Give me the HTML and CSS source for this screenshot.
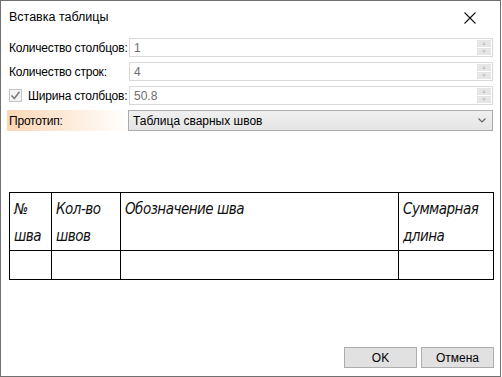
FILE: index.html
```html
<!DOCTYPE html>
<html lang="ru">
<head>
    <meta charset="UTF-8">
    <title>Вставка таблицы</title>
    <link rel="stylesheet" href="styles.css">
</head>
<body>
    <div class="dialog">
        <div class="titlebar">
            <span class="title">Вставка таблицы</span>
            <button class="close-btn" aria-label="Закрыть">
                <svg width="12" height="12" viewBox="0 0 12 12"><path d="M0.5 0.5 L11.5 11.5 M11.5 0.5 L0.5 11.5" stroke="#111" stroke-width="1.1" fill="none"/></svg>
            </button>
        </div>

        <!-- Table parameters -->
        <div class="form">
            <div class="form-row">
                <label class="field-label">Количество столбцов:</label>
                <div class="spin-box">
                    <span class="spin-value">1</span>
                    <div class="spin-buttons">
                        <span class="spin-btn">&#9650;</span>
                        <span class="spin-btn">&#9660;</span>
                    </div>
                </div>
            </div>
            <div class="form-row">
                <label class="field-label">Количество строк:</label>
                <div class="spin-box">
                    <span class="spin-value">4</span>
                    <div class="spin-buttons">
                        <span class="spin-btn">&#9650;</span>
                        <span class="spin-btn">&#9660;</span>
                    </div>
                </div>
            </div>
            <div class="form-row">
                <label class="field-label check-label">
                    <span class="checkbox">
                        <svg width="11" height="11" viewBox="0 0 11 11"><path d="M1.5 5.5 L4.3 8.5 L9.5 1.8" stroke="#7a7a7a" stroke-width="1.6" fill="none"/></svg>
                    </span>
                    Ширина столбцов:
                </label>
                <div class="spin-box">
                    <span class="spin-value">50.8</span>
                    <div class="spin-buttons">
                        <span class="spin-btn">&#9650;</span>
                        <span class="spin-btn">&#9660;</span>
                    </div>
                </div>
            </div>
            <div class="form-row proto-row">
                <label class="field-label proto-label">Прототип:</label>
                <div class="combo">
                    <span>Таблица сварных швов</span>
                    <svg width="8" height="5" viewBox="0 0 8 5"><path d="M0.5 0.5 L4 4 L7.5 0.5" stroke="#666" stroke-width="1.2" fill="none"/></svg>
                </div>
            </div>
        </div>

        <!-- Preview of the prototype table -->
        <div class="preview">
            <table class="weld-table">
                <colgroup>
                    <col class="c-num">
                    <col class="c-qty">
                    <col class="c-name">
                    <col class="c-len">
                </colgroup>
                <tr class="head">
                    <td>№<br>шва</td>
                    <td>Кол-во<br>швов</td>
                    <td>Обозначение шва</td>
                    <td>Суммарная<br>длина</td>
                </tr>
                <tr class="body-row">
                    <td></td><td></td><td></td><td></td>
                </tr>
            </table>
        </div>

        <div class="footer">
            <button class="btn">OK</button>
            <button class="btn">Отмена</button>
        </div>
    </div>
</body>
</html>
```

FILE: styles.css
```css
:root {
    --border: #707070;
    --field-border: #d9d9d9;
    --disabled-text: #6d6d6d;
}
body {
    margin: 0;
    background: #fff;
    font-family: "Liberation Sans", Arial, sans-serif;
    font-size: 12px;
    color: #000;
}
.dialog {
    width: 501px;
    height: 377px;
    box-sizing: border-box;
    border: 1px solid var(--border);
    display: flex;
    flex-direction: column;
    background: #fff;
}
.titlebar {
    height: 37px;
    display: flex;
    align-items: flex-start;
    justify-content: space-between;
    padding: 8px 0 0 8px;
    box-sizing: border-box;
}
.title {
    font-size: 12.5px;
    line-height: 16px;
}
.close-btn {
    background: none;
    border: none;
    padding: 0;
    margin: 3px 24px 0 0;
    width: 12px;
    height: 12px;
    display: flex;
}
/* Form rows */
.form {
    display: flex;
    flex-direction: column;
    gap: 5px;
    padding: 0 7px 0 7px;
}
.form-row {
    display: flex;
    align-items: stretch;
    height: 19px;
}
.proto-row {
    height: 21px;
}
.field-label {
    width: 121px;
    flex: none;
    display: flex;
    align-items: center;
    padding-left: 1px;
    box-sizing: border-box;
    white-space: nowrap;
    letter-spacing: -0.2px;
}
.check-label {
    gap: 6px;
}
.checkbox {
    width: 13px;
    height: 13px;
    box-sizing: border-box;
    border: 1px solid #c4c4c4;
    background: #f4f4f4;
    display: flex;
    align-items: center;
    justify-content: center;
}
.proto-label {
    background: linear-gradient(to right, #fcd6b4, #fff 100%);
    margin-left: -1px;
    padding-left: 2px;
}
.spin-box {
    flex: 1;
    border: 1px solid var(--field-border);
    display: flex;
    align-items: center;
    justify-content: space-between;
    padding: 1px;
    box-sizing: border-box;
}
.spin-value {
    color: var(--disabled-text);
    padding-left: 3px;
}
.spin-buttons {
    width: 14px;
    height: 100%;
    display: flex;
    flex-direction: column;
    gap: 1px;
}
.spin-btn {
    flex: 1;
    background: #e6e6e6;
    color: #bdbdbd;
    font-size: 5px;
    display: flex;
    align-items: center;
    justify-content: center;
    line-height: 1;
}
.combo {
    flex: 1;
    border: 1px solid #acacac;
    background: linear-gradient(#f0f0f0, #e5e5e5);
    display: flex;
    align-items: center;
    justify-content: space-between;
    padding: 0 6px 0 4px;
    box-sizing: border-box;
}
/* Preview table */
.preview {
    padding: 61px 9px 0 8px;
}
.weld-table {
    width: 484px;
    border-collapse: collapse;
    table-layout: fixed;
    font-family: "DejaVu Sans Condensed", "DejaVu Sans", sans-serif;
    font-style: italic;
    font-size: 15px;
    letter-spacing: -0.5px;
    color: #111;
}
.c-num { width: 42px; }
.c-qty { width: 69px; }
.c-name { width: 278px; }
.c-len { width: 95px; }
.weld-table td {
    border: 1px solid #000;
    vertical-align: top;
    padding: 3px 4px 0 4px;
    line-height: 27px;
    white-space: nowrap;
}
.weld-table .head td {
    height: 52px;
}
.weld-table .body-row td {
    height: 25px;
}
.footer {
    margin-top: auto;
    display: flex;
    justify-content: flex-end;
    gap: 4px;
    padding: 0 6px 8px 0;
}
.btn {
    width: 73px;
    height: 21px;
    border: 1px solid #adadad;
    background: #e1e1e1;
    font-family: "Liberation Sans", Arial, sans-serif;
    font-size: 12px;
    color: #000;
    padding: 0;
}
```
